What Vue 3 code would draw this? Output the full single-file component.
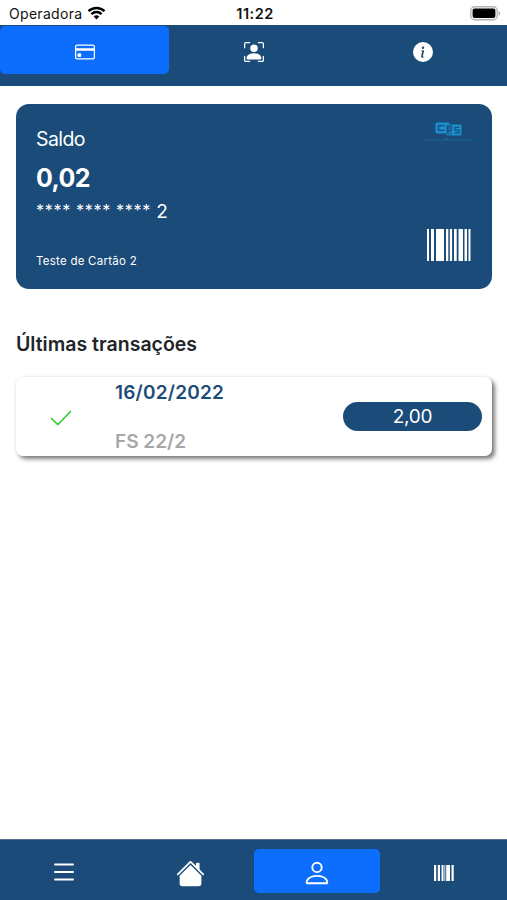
<template>
  <div class="screen">
    <div class="status-bar">
      <div class="carrier">
        <span class="carrier-name">Operadora</span>
        <svg class="wifi" viewBox="0 0 18 14">
          <path d="M1 5.2a11.5 11.5 0 0 1 16 0" />
          <path d="M3.9 8.1a7.4 7.4 0 0 1 10.2 0" />
          <path class="dot" d="M9 13.4 6.2 10.6a4 4 0 0 1 5.6 0z" />
        </svg>
      </div>
      <span class="clock">11:22</span>
      <svg class="battery" viewBox="0 0 31 15">
        <rect x="0.8" y="0.8" width="26.4" height="13" rx="4" fill="#fff" stroke="#b5b5b5" stroke-width="1.4" />
        <rect x="2.6" y="2.6" width="22.8" height="9.4" rx="2" fill="#000" />
        <path d="M28.6 5v4.6c2.2-.8 2.2-3.8 0-4.6z" fill="#b0b0b0" />
      </svg>
    </div>

    <nav class="top-tabs">
      <button class="tab active">
        <svg class="icon" viewBox="0 0 16 16">
          <path d="M0 4a2 2 0 0 1 2-2h12a2 2 0 0 1 2 2v8a2 2 0 0 1-2 2H2a2 2 0 0 1-2-2V4zm2-1a1 1 0 0 0-1 1v1h14V4a1 1 0 0 0-1-1H2zm13 4H1v5a1 1 0 0 0 1 1h12a1 1 0 0 0 1-1V7z" />
          <path d="M2 10a1 1 0 0 1 1-1h1a1 1 0 0 1 1 1v1a1 1 0 0 1-1 1H3a1 1 0 0 1-1-1v-1z" />
        </svg>
      </button>
      <button class="tab">
        <svg class="icon" viewBox="0 0 16 16">
          <path d="M1.5 1a.5.5 0 0 0-.5.5v3a.5.5 0 0 1-1 0v-3A1.5 1.5 0 0 1 1.5 0h3a.5.5 0 0 1 0 1h-3zM11 .5a.5.5 0 0 1 .5-.5h3A1.5 1.5 0 0 1 16 1.5v3a.5.5 0 0 1-1 0v-3a.5.5 0 0 0-.5-.5h-3a.5.5 0 0 1-.5-.5zM.5 11a.5.5 0 0 1 .5.5v3a.5.5 0 0 0 .5.5h3a.5.5 0 0 1 0 1h-3A1.5 1.5 0 0 1 0 14.5v-3a.5.5 0 0 1 .5-.5zm15 0a.5.5 0 0 1 .5.5v3a1.5 1.5 0 0 1-1.5 1.5h-3a.5.5 0 0 1 0-1h3a.5.5 0 0 0 .5-.5v-3a.5.5 0 0 1 .5-.5z" />
          <path d="M3 14s-1 0-1-1 1-4 6-4 6 3 6 4-1 1-1 1H3zm8-9a3 3 0 1 1-6 0 3 3 0 0 1 6 0z" />
        </svg>
      </button>
      <button class="tab">
        <svg class="icon" viewBox="0 0 16 16">
          <path d="M8 16A8 8 0 1 0 8 0a8 8 0 0 0 0 16zm.93-9.412-1 4.705c-.07.34.029.533.304.533.194 0 .487-.07.686-.246l-.088.416c-.287.346-.92.598-1.465.598-.703 0-1.002-.422-.808-1.319l.738-3.468c.064-.293.006-.399-.287-.47l-.451-.081.082-.381 2.29-.287zM8 5.5a1 1 0 1 1 0-2 1 1 0 0 1 0 2z" />
        </svg>
      </button>
    </nav>

    <main class="content">
      <section class="card">
        <div class="card-info">
          <span class="card-label">Saldo</span>
          <strong class="card-balance">0,02</strong>
          <span class="card-number"><span class="mask">**** **** ****</span> 2</span>
          <span class="card-name">Teste de Cartão 2</span>
        </div>
        <div class="card-side">
          <svg class="logo" viewBox="0 0 50 22">
            <rect x="11.5" y="1.5" width="14" height="11" rx="1" fill="#1b8fcd" />
            <rect x="22" y="3.5" width="9" height="11" rx="1" fill="#1878b3" />
            <rect x="28" y="3.5" width="9.5" height="11" rx="1" fill="#1b8fcd" />
            <g fill="none" stroke="#1b4b78" stroke-width="1.2">
              <path d="M20.5 4.7h-6v4.6h6" />
              <path d="M23.8 12.5V5.5h3.6v4h-3" />
              <path d="M35.5 6.5H31v2.6h4v2.7h-4.5" />
            </g>
            <path d="M1 19h48M21 17.6h4" stroke="#1b608f" stroke-width="1.4" />
          </svg>
          <svg class="barcode" viewBox="0 0 44 32">
            <rect v-for="bar in bars" :key="bar.x" :x="bar.x" y="0" :width="bar.w" height="32" />
          </svg>
        </div>
      </section>

      <h2 class="section-title">Últimas transações</h2>

      <article v-for="item in transactions" :key="item.reference" class="transaction">
        <div class="state">
          <svg class="check" viewBox="0 0 22 16">
            <path d="M1 8l6.8 6.6L21 1" />
          </svg>
        </div>
        <div class="details">
          <span class="date">{{ item.date }}</span>
          <span class="reference">{{ item.reference }}</span>
        </div>
        <span class="amount">{{ item.amount }}</span>
      </article>
    </main>

    <nav class="bottom-nav">
      <button class="nav-item">
        <svg class="icon-menu" viewBox="0 0 22 18">
          <path d="M2 1.5h18M2 9h18M2 16.5h18" />
        </svg>
      </button>
      <button class="nav-item">
        <svg class="icon-home" viewBox="0 0 16 16">
          <path d="m8 3.293 6 6V13.5a1.5 1.5 0 0 1-1.5 1.5h-9A1.5 1.5 0 0 1 2 13.5V9.293l6-6z" />
          <path d="M13 2.5V6l-2-2V2.5a.5.5 0 0 1 .5-.5h1a.5.5 0 0 1 .5.5z" />
          <path d="M7.293 1.5a1 1 0 0 1 1.414 0l6.647 6.646a.5.5 0 0 1-.708.708L8 2.207 1.354 8.854a.5.5 0 1 1-.708-.708L7.293 1.5z" />
        </svg>
      </button>
      <button class="nav-item active">
        <svg class="icon-person" viewBox="0 0 16 16">
          <path d="M8 8a3 3 0 1 0 0-6 3 3 0 0 0 0 6zm2-3a2 2 0 1 1-4 0 2 2 0 0 1 4 0zm4 8c0 1-1 1-1 1H3s-1 0-1-1 1-4 6-4 6 3 6 4zm-1-.004c-.001-.246-.154-.986-.832-1.664C11.516 10.68 10.289 10 8 10c-2.29 0-3.516.68-4.168 1.332-.678.678-.83 1.418-.832 1.664h10z" />
        </svg>
      </button>
      <button class="nav-item">
        <svg class="icon-code" viewBox="0 0 20 16">
          <path d="M0 0h2.2v16H0zM3.8 0H6v16H3.8zM7.5 0h2v16h-2zM10.4 0h.9v16h-.9zM12.2 0H16v16h-3.8zM17.5 0h2.2v16h-2.2z" />
        </svg>
      </button>
    </nav>
  </div>
</template>

<script setup>
const bars = [
  { x: 0, w: 2 },
  { x: 4, w: 3 },
  { x: 9, w: 8 },
  { x: 19, w: 2.3 },
  { x: 22.8, w: 2.3 },
  { x: 27, w: 2.7 },
  { x: 31.5, w: 4.5 },
  { x: 37.5, w: 2.5 },
  { x: 41.5, w: 2 }
];

const transactions = [
  { date: '16/02/2022', reference: 'FS 22/2', amount: '2,00' }
];
</script>

<style>
body {
  margin: 0;
  background: #fff;
}
</style>

<style scoped>
.screen {
  height: 900px;
  display: flex;
  flex-direction: column;
  overflow: hidden;
  background: #fff;
  color: #212529;
  font-family: Inter, "Liberation Sans", sans-serif;
}

button {
  border: none;
  padding: 0;
  background: none;
  color: #fff;
  display: flex;
  align-items: center;
  justify-content: center;
}

svg {
  display: block;
  fill: currentColor;
}

.status-bar {
  height: 25px;
  flex: none;
  display: grid;
  grid-template-columns: 1fr auto 1fr;
  align-items: center;
  padding: 2px 6px 0 9px;
  box-sizing: border-box;
  font-size: 14px;
  line-height: 20px;
  color: #111;
}

.carrier {
  display: flex;
  align-items: center;
  gap: 5px;
  letter-spacing: 0.3px;
}

.wifi {
  width: 19px;
  height: 14px;
  margin-top: -2px;
  fill: none;
  stroke: #000;
  stroke-width: 2.4;
}
.wifi .dot {
  fill: #000;
  stroke: none;
}

.clock {
  font-size: 14.5px;
  font-weight: 600;
  letter-spacing: 0.5px;
}

.battery {
  width: 31px;
  height: 15px;
  margin-top: -1px;
  justify-self: end;
}

.top-tabs {
  height: 61px;
  flex: none;
  display: flex;
  align-items: flex-start;
  padding-top: 1px;
  box-sizing: border-box;
  background: #1b4b78;
}

.tab {
  flex: 1;
  height: 48px;
  padding-top: 4px;
  border-radius: 5px;
}

.tab.active,
.nav-item.active {
  background: #0d6efd;
}

.icon {
  width: 20px;
  height: 20px;
}

.content {
  flex: 1;
  padding: 18px 15px 0 16px;
}

.card {
  height: 185px;
  box-sizing: border-box;
  display: flex;
  justify-content: space-between;
  padding: 17px 18px 0 20px;
  border-radius: 13px;
  background: #1b4b78;
  color: #fff;
}

.card-info {
  display: flex;
  flex-direction: column;
}

.card-label {
  font-size: 19.5px;
  line-height: 36px;
  letter-spacing: -0.6px;
}

.card-balance {
  font-size: 25px;
  font-weight: 700;
  line-height: 42px;
  letter-spacing: -0.6px;
}

.card-number {
  font-size: 19px;
  line-height: 26px;
}

.mask {
  font-size: 16px;
  line-height: 1;
  letter-spacing: 0.7px;
  vertical-align: 2px;
}

.card-name {
  margin-top: 27px;
  font-size: 11.5px;
  line-height: 18px;
  letter-spacing: 0.25px;
}

.card-side {
  display: flex;
  flex-direction: column;
  align-items: center;
}

.logo {
  width: 50px;
  height: 22px;
}

.barcode {
  width: 44px;
  height: 32px;
  margin-top: 86px;
}

.section-title {
  margin: 41px 0 0;
  font-size: 19.5px;
  font-weight: 600;
  line-height: 28px;
}

.transaction {
  height: 79px;
  margin-top: 19px;
  display: flex;
  align-items: center;
  border-radius: 7px;
  background: #fff;
  box-shadow: 3px 3px 4px rgba(0, 0, 0, 0.5), 0 0 3px rgba(0, 0, 0, 0.1);
}

.state {
  width: 99px;
  padding-left: 34px;
  padding-top: 3px;
  box-sizing: border-box;
}

.check {
  width: 22px;
  height: 16px;
  fill: none;
  stroke: #38c938;
  stroke-width: 1.6;
}

.details {
  flex: 1;
  display: flex;
  flex-direction: column;
  gap: 21px;
  padding-top: 1px;
  font-size: 19px;
  font-weight: 600;
  line-height: 28px;
}

.date {
  color: #1b4b78;
  letter-spacing: 0.2px;
}

.reference {
  color: #a6a6a6;
}

.amount {
  width: 139px;
  margin-right: 10px;
  padding-top: 1px;
  border-radius: 15px;
  background: #1b4b78;
  color: #fff;
  font-size: 19px;
  line-height: 28px;
  letter-spacing: -0.3px;
  text-align: center;
}

.bottom-nav {
  height: 61px;
  flex: none;
  display: flex;
  padding-top: 9px;
  box-sizing: border-box;
  background: #1b4b78;
  border-top: 1px solid #536f8b;
}

.nav-item {
  flex: 1;
  height: 44px;
  padding-top: 4px;
  border-radius: 5px;
}

.icon-menu {
  width: 22px;
  height: 18px;
  margin-top: -2px;
  margin-left: 1px;
  fill: none;
  stroke: #fff;
  stroke-width: 2;
  stroke-linecap: round;
}

.icon-home {
  width: 29px;
  height: 29px;
}

.icon-person {
  width: 30px;
  height: 30px;
}

.icon-code {
  width: 20px;
  height: 16px;
}
</style>
